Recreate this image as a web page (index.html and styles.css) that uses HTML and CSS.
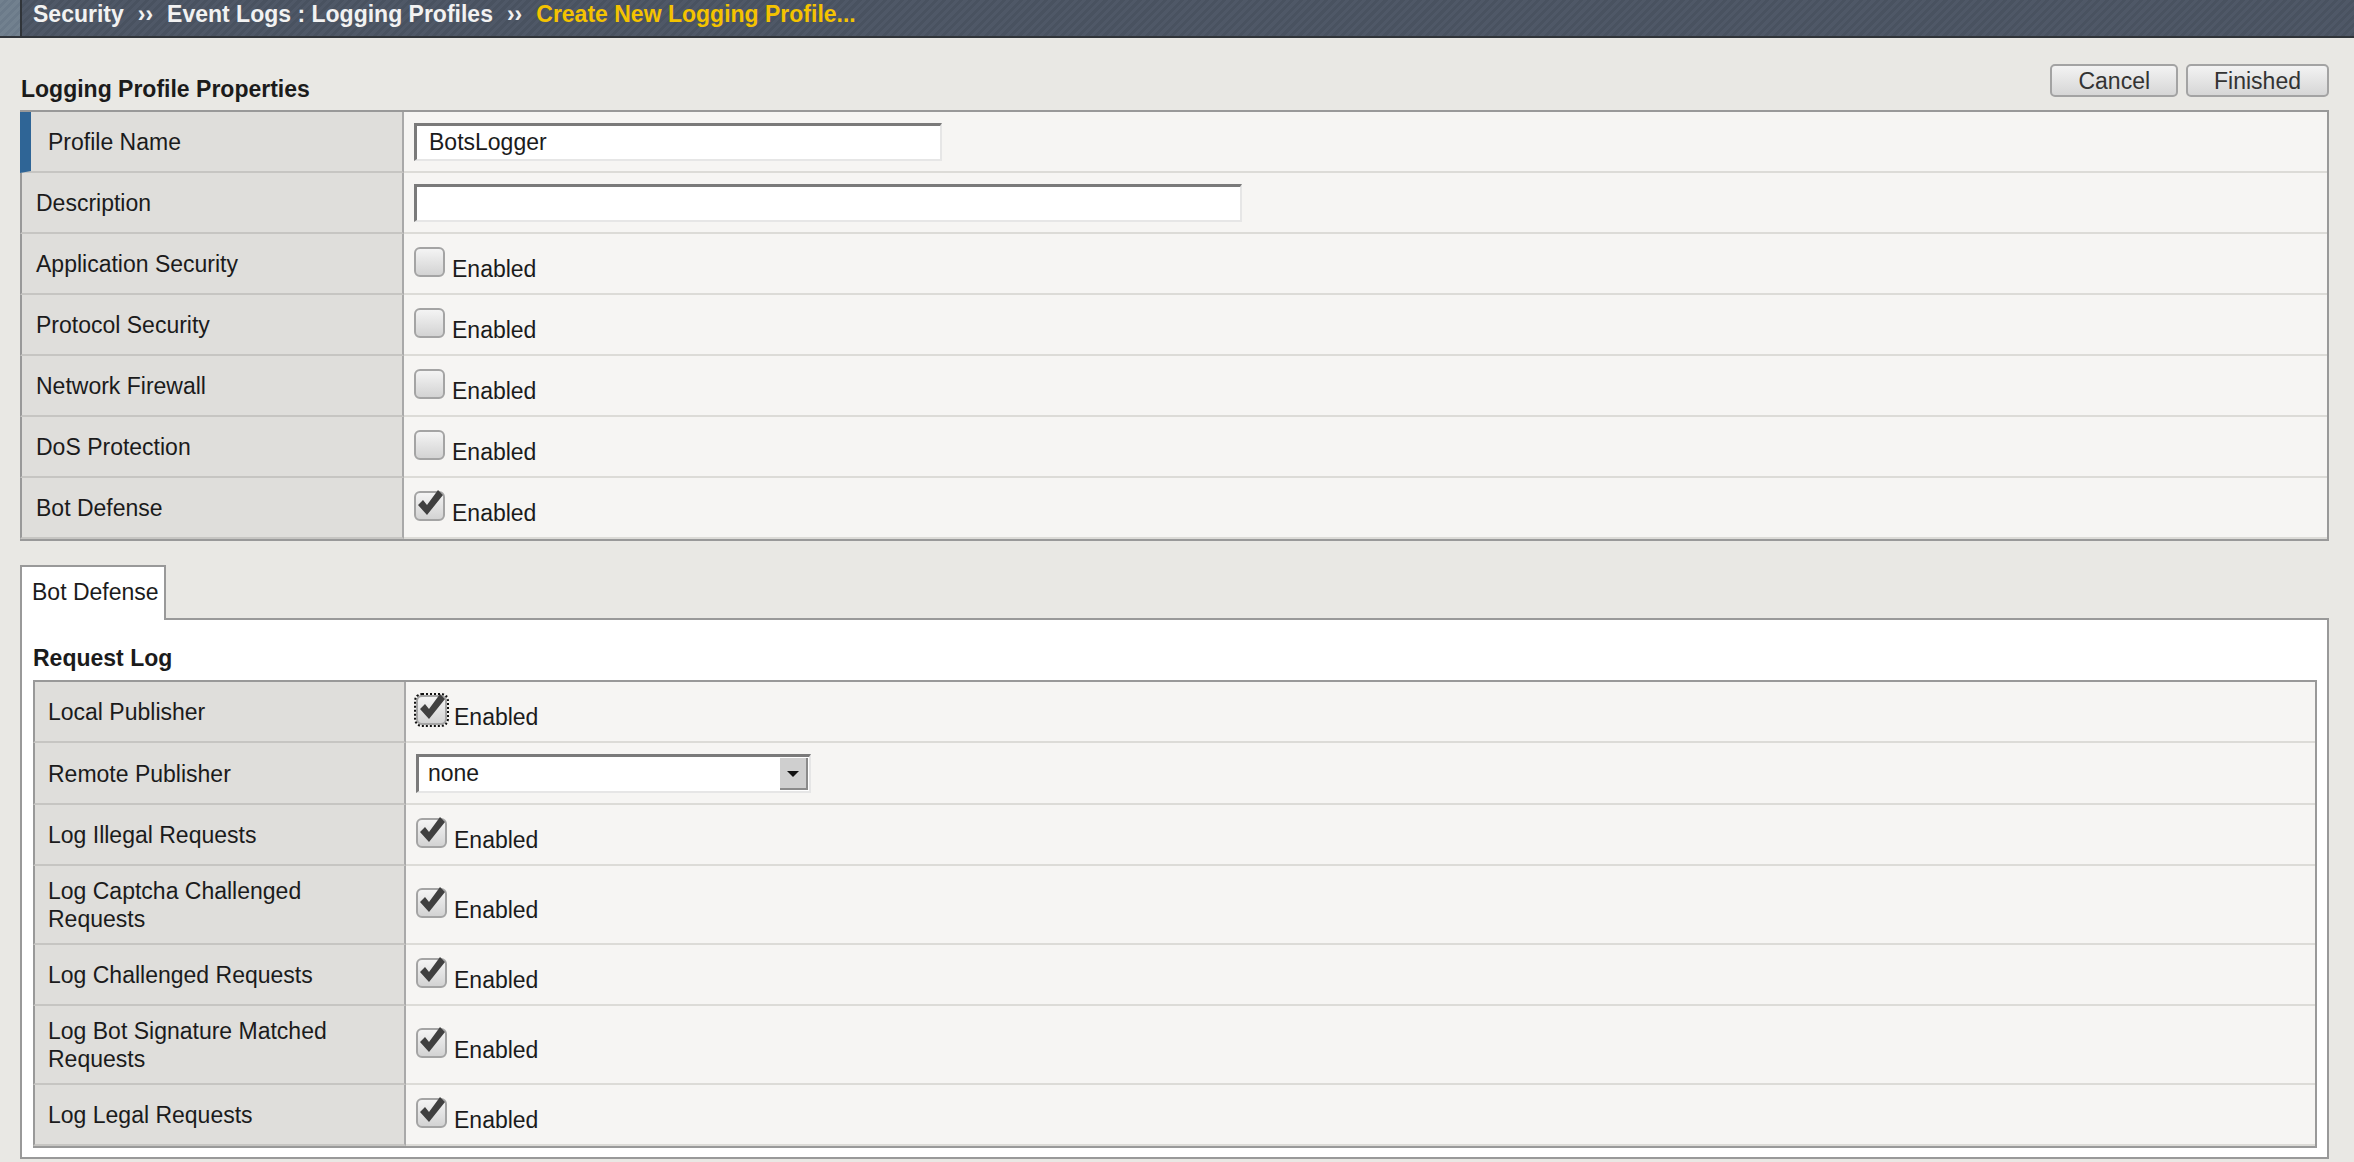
FILE: index.html
```html
<!DOCTYPE html>
<html lang="en">
<head>
  <meta charset="UTF-8">
  <meta name="viewport" content="width=device-width, initial-scale=1.0">
  <title>Create New Logging Profile</title>
  <link rel="stylesheet" href="styles.css">
</head>
<body>
  <!-- Breadcrumb bar -->
  <div class="crumbs">
    <div class="crumbs-edge"></div>
    <div class="crumbs-bar">
      <span>Security</span><span class="sep">&rsaquo;&rsaquo;</span><span>Event Logs : Logging Profiles</span><span class="sep">&rsaquo;&rsaquo;</span><span class="current">Create New Logging Profile...</span>
    </div>
  </div>

  <div class="page">
    <div class="titlebar">
      <h2>Logging Profile Properties</h2>
      <div class="actions">
        <button type="button">Cancel</button>
        <button type="button">Finished</button>
      </div>
    </div>

    <table class="props">
      <tr>
        <td class="label required">Profile Name</td>
        <td class="value"><input type="text" class="text name" value="BotsLogger"></td>
      </tr>
      <tr>
        <td class="label">Description</td>
        <td class="value"><input type="text" class="text desc" value=""></td>
      </tr>
      <tr>
        <td class="label">Application Security</td>
        <td class="value"><span class="cb"></span><span class="cb-text">Enabled</span></td>
      </tr>
      <tr>
        <td class="label">Protocol Security</td>
        <td class="value"><span class="cb"></span><span class="cb-text">Enabled</span></td>
      </tr>
      <tr>
        <td class="label">Network Firewall</td>
        <td class="value"><span class="cb"></span><span class="cb-text">Enabled</span></td>
      </tr>
      <tr>
        <td class="label">DoS Protection</td>
        <td class="value"><span class="cb"></span><span class="cb-text">Enabled</span></td>
      </tr>
      <tr>
        <td class="label">Bot Defense</td>
        <td class="value"><span class="cb"><svg class="tick" viewBox="0 0 30 30"><path d="M4 15 L9 10 L13 15 L24 0 L29 5 L13 25 Z"/></svg></span><span class="cb-text">Enabled</span></td>
      </tr>
    </table>

    <!-- Tab strip -->
    <div class="tabs">
      <div class="tab">Bot Defense</div>
    </div>

    <div class="panel">
      <h3>Request Log</h3>
      <table class="props inner">
        <tr>
          <td class="label">Local Publisher</td>
          <td class="value"><span class="cb focus"><svg class="tick" viewBox="0 0 30 30"><path d="M4 15 L9 10 L13 15 L24 0 L29 5 L13 25 Z"/></svg></span><span class="cb-text">Enabled</span></td>
        </tr>
        <tr>
          <td class="label">Remote Publisher</td>
          <td class="value">
            <span class="select"><span class="select-value">none</span><span class="select-arrow"></span></span>
          </td>
        </tr>
        <tr>
          <td class="label">Log Illegal Requests</td>
          <td class="value"><span class="cb"><svg class="tick" viewBox="0 0 30 30"><path d="M4 15 L9 10 L13 15 L24 0 L29 5 L13 25 Z"/></svg></span><span class="cb-text">Enabled</span></td>
        </tr>
        <tr>
          <td class="label">Log Captcha Challenged Requests</td>
          <td class="value"><span class="cb"><svg class="tick" viewBox="0 0 30 30"><path d="M4 15 L9 10 L13 15 L24 0 L29 5 L13 25 Z"/></svg></span><span class="cb-text">Enabled</span></td>
        </tr>
        <tr>
          <td class="label">Log Challenged Requests</td>
          <td class="value"><span class="cb"><svg class="tick" viewBox="0 0 30 30"><path d="M4 15 L9 10 L13 15 L24 0 L29 5 L13 25 Z"/></svg></span><span class="cb-text">Enabled</span></td>
        </tr>
        <tr>
          <td class="label">Log Bot Signature Matched Requests</td>
          <td class="value"><span class="cb"><svg class="tick" viewBox="0 0 30 30"><path d="M4 15 L9 10 L13 15 L24 0 L29 5 L13 25 Z"/></svg></span><span class="cb-text">Enabled</span></td>
        </tr>
        <tr>
          <td class="label">Log Legal Requests</td>
          <td class="value"><span class="cb"><svg class="tick" viewBox="0 0 30 30"><path d="M4 15 L9 10 L13 15 L24 0 L29 5 L13 25 Z"/></svg></span><span class="cb-text">Enabled</span></td>
        </tr>
      </table>
    </div>
  </div>
</body>
</html>
```

FILE: styles.css
```css
body {
  margin: 0;
  background: #e9e8e4;
  font-family: "Liberation Sans", Arial, sans-serif;
  font-size: 23px;
  line-height: 28px;
  color: #1b1b1b;
}

/* breadcrumb bar */
.crumbs {
  display: flex;
  height: 36px;
  border-bottom: 2px solid #303439;
}
.crumbs-edge {
  width: 20px;
  border-right: 2px solid #303439;
  background: repeating-linear-gradient(135deg, #72818f 0 3px, #6b7a89 3px 6px);
}
.crumbs-bar {
  flex: 1;
  padding-left: 11px;
  background: repeating-linear-gradient(135deg, #4f5867 0 3px, #495260 3px 6px);
  color: #f2f2f2;
  font-weight: bold;
  white-space: nowrap;
}
.crumbs-bar .sep {
  margin: 0 14px;
}
.crumbs-bar .current {
  color: #f4c300;
}

.page {
  padding: 0 25px 0 20px;
}

.titlebar {
  display: flex;
  justify-content: space-between;
  align-items: flex-start;
  margin-bottom: 7px;
}
.titlebar h2 {
  margin: 37px 0 0 1px;
  font-size: 23px;
  line-height: 28px;
}
.actions {
  display: flex;
  gap: 8px;
  margin-top: 26px;
}
.actions button {
  height: 33px;
  padding: 0 26px;
  font: inherit;
  line-height: 28px;
  color: #333;
  border: 2px solid #a3a3a3;
  border-radius: 5px;
  background: linear-gradient(#f3f3f3, #d6d6d6);
}

/* property tables */
.props {
  width: 100%;
  border-collapse: separate;
  border-spacing: 0;
  border: 2px solid #999;
  border-left: none;
}
.props td {
  height: 38px;
  padding: 11px 10px 10px;
  vertical-align: middle;
}
.props .label {
  width: 352px;
  padding-left: 14px;
  padding-right: 14px;
  background: #dfdedb;
  border-left: 2px solid #999;
  border-right: 2px solid #a9a9a9;
  border-bottom: 2px solid #c6c5c2;
}
.props .label.required {
  width: 340px;
  padding-left: 17px;
  border-left: 11px solid #2f6596;
}
.props .value {
  background: #f6f5f3;
  border-bottom: 2px solid #dcdbd7;
}
.props.inner .label {
  width: 342px;
  padding-left: 13px;
}

.text {
  box-sizing: border-box;
  height: 38px;
  padding: 0 12px;
  font: inherit;
  color: #1b1b1b;
  background: #fff;
  border-style: solid;
  border-width: 3px 2px 2px 3px;
  border-color: #7a7a7a #e6e6e6 #e6e6e6 #7a7a7a;
  vertical-align: middle;
}
.text.name {
  width: 528px;
}
.text.desc {
  width: 828px;
}

/* checkboxes */
.cb {
  display: inline-block;
  box-sizing: border-box;
  width: 31px;
  height: 30px;
  margin-top: 1px;
  border: 2px solid #a4a4a4;
  border-radius: 6px;
  background: linear-gradient(#f4f4f4, #d3d3d3);
  vertical-align: baseline;
}
.cb .tick {
  display: block;
  width: 30px;
  height: 30px;
  margin: -3px 0 0 -2px;
  overflow: visible;
  fill: #404040;
}
.cb.focus {
  outline: 2px dotted #111;
}
.cb-text {
  margin-left: 7px;
}

/* dropdown */
.select {
  display: inline-flex;
  box-sizing: border-box;
  width: 395px;
  height: 39px;
  background: #fff;
  border-style: solid;
  border-width: 3px 2px 2px 3px;
  border-color: #7a7a7a #e6e6e6 #e6e6e6 #7a7a7a;
  vertical-align: middle;
}
.select-value {
  flex: 1;
  padding-left: 9px;
  line-height: 33px;
}
.select-arrow {
  position: relative;
  width: 26px;
  margin: 1px 1px 1px 0;
  background: #cfcfcf;
  border-right: 2px solid #8a8a8a;
  border-bottom: 2px solid #8a8a8a;
}
.select-arrow::after {
  content: "";
  position: absolute;
  left: 7px;
  top: 13px;
  border-left: 6px solid transparent;
  border-right: 6px solid transparent;
  border-top: 6px solid #111;
}

/* tabs */
.tabs {
  display: flex;
  margin-top: 24px;
}
.tab {
  position: relative;
  z-index: 1;
  height: 53px;
  margin-bottom: -2px;
  padding: 0 5px 0 10px;
  line-height: 50px;
  background: #fff;
  border: 2px solid #999;
  border-bottom: none;
}
.panel {
  padding: 24px 10px 9px 11px;
  background: #fff;
  border: 2px solid #999;
}
.panel h3 {
  margin: 0 0 8px;
  font-size: 23px;
  line-height: 28px;
}
```
